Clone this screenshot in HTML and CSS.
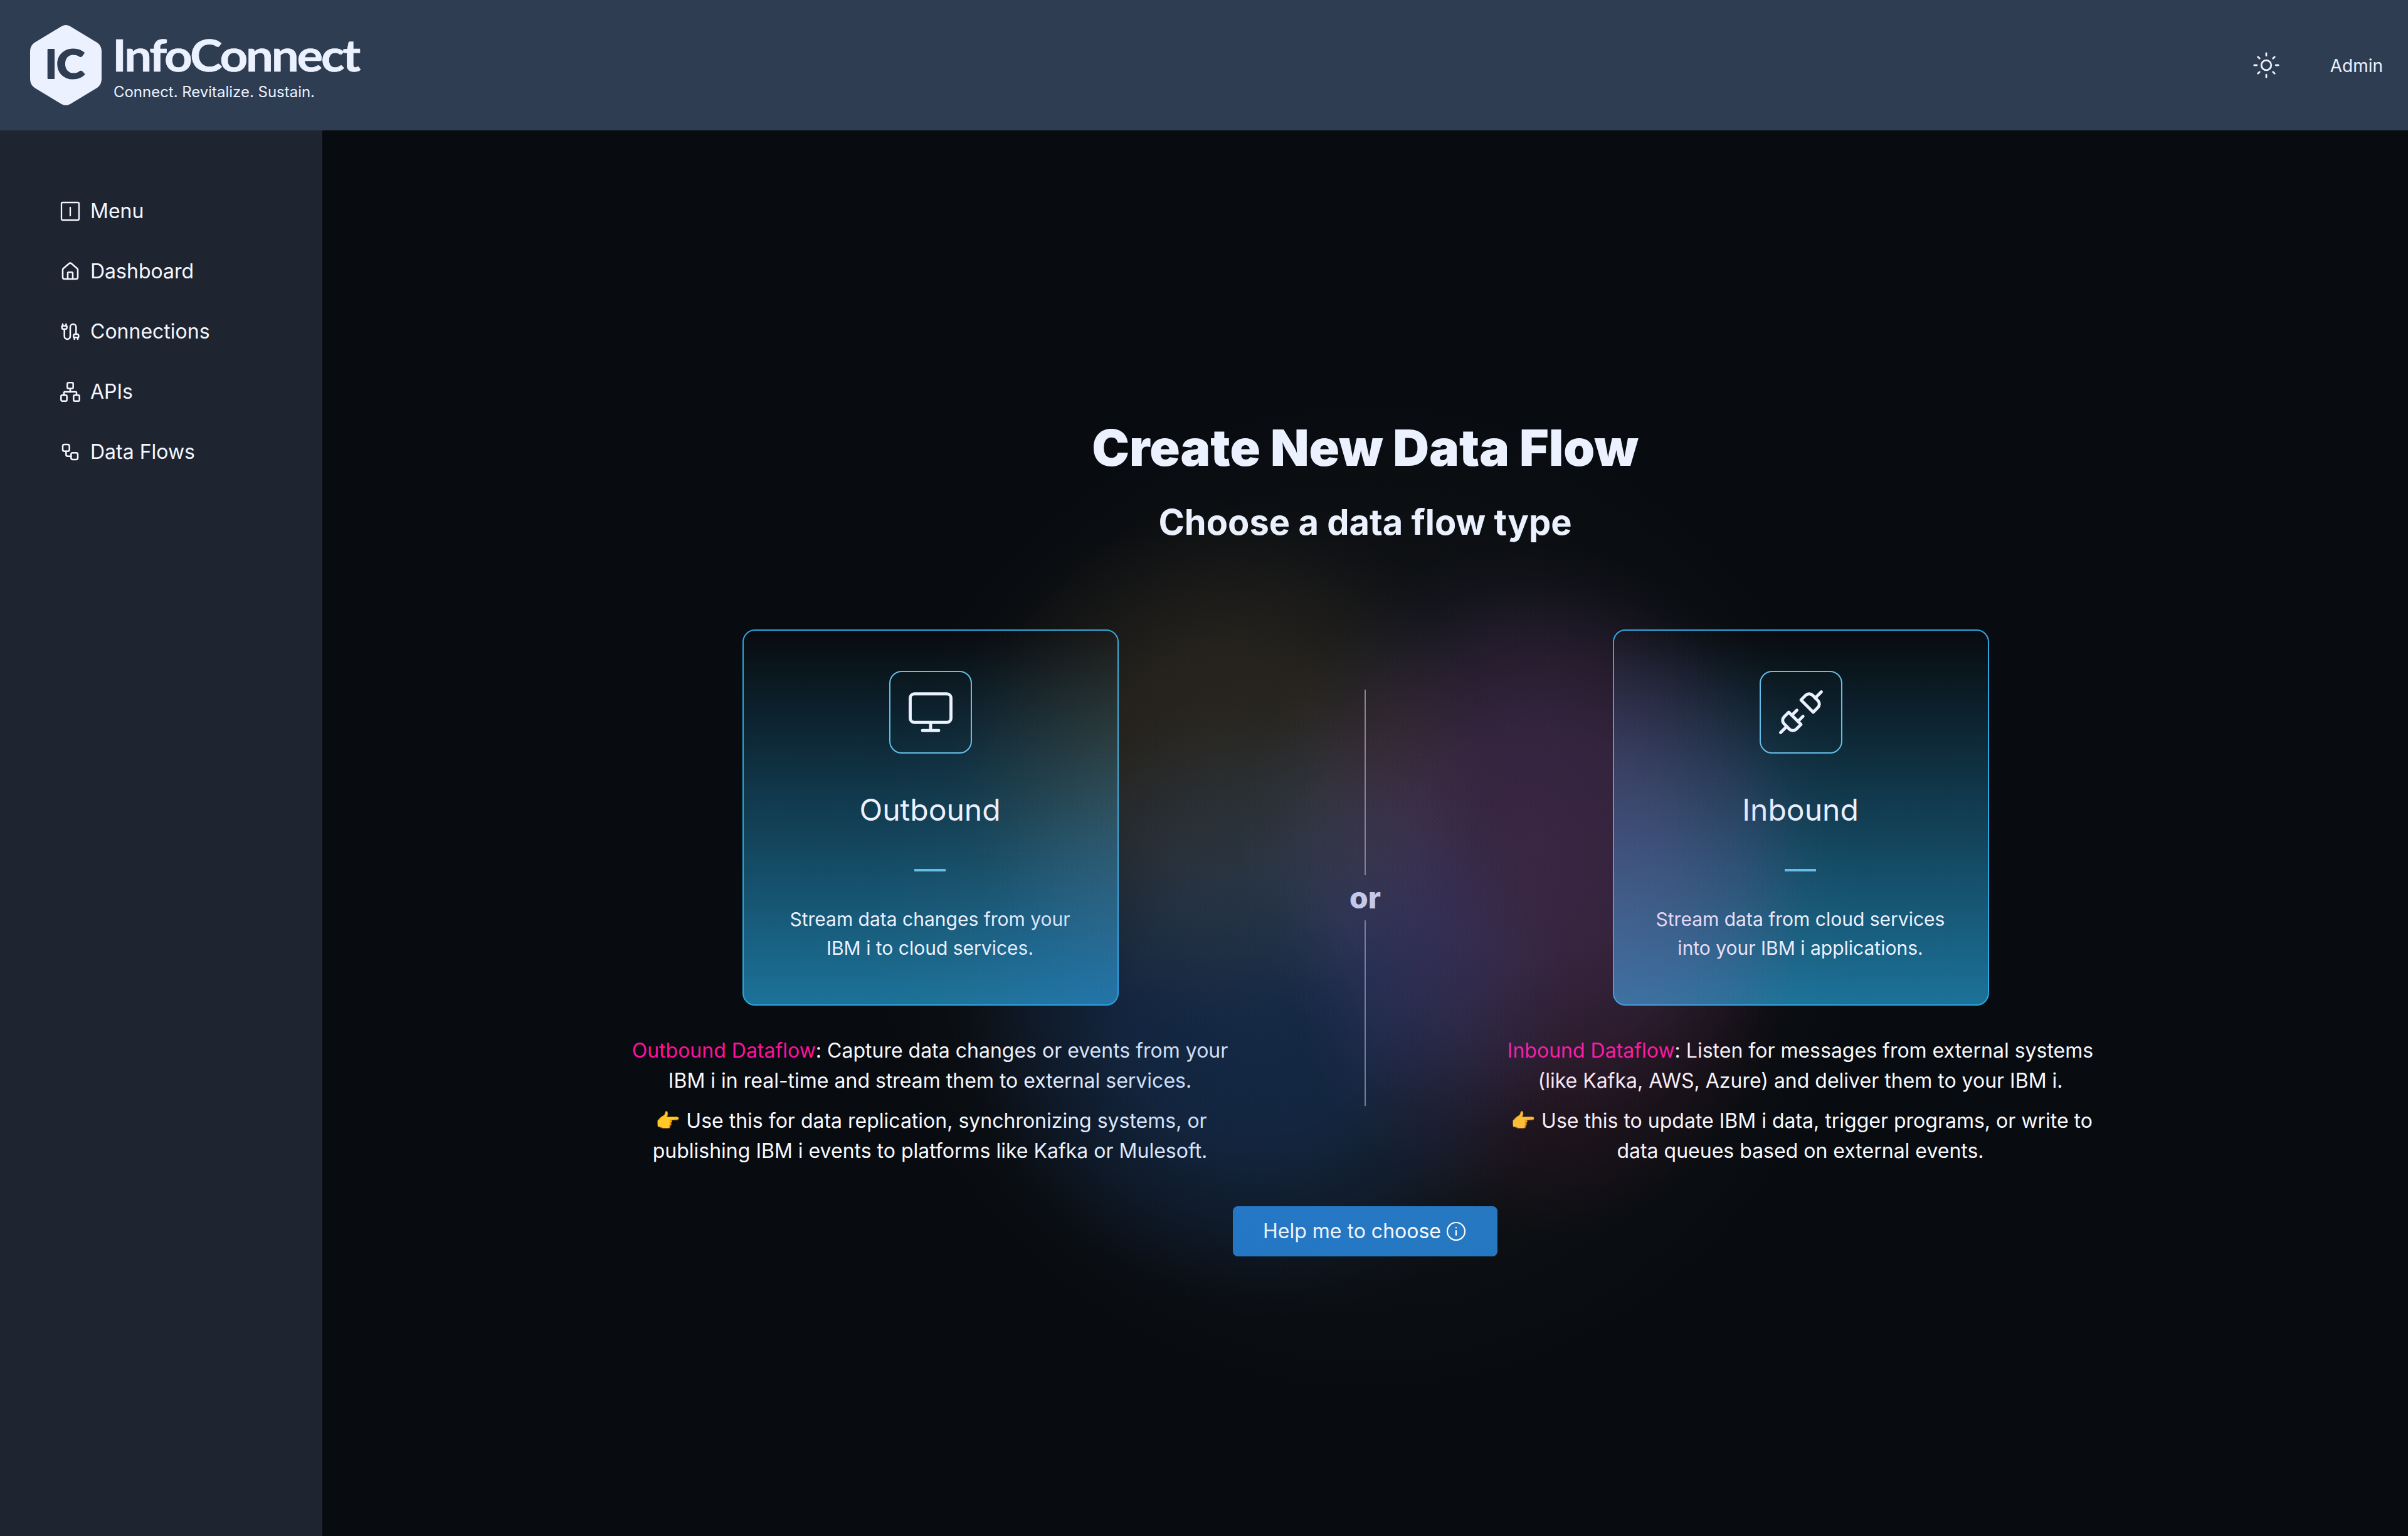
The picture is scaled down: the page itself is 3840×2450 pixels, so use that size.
FILE: index.html
```html
<!DOCTYPE html>
<html lang="en">
<head>
  <meta charset="UTF-8" />
  <meta name="viewport" content="width=device-width, initial-scale=1.0" />
  <title>InfoConnect - Create New Data Flow</title>
  <link rel="stylesheet" href="styles.css">
</head>
<body>
  <!-- Top bar -->
  <header class="topbar">
    <svg class="logo" width="560" height="144" viewBox="0 0 560 144">
      <path class="logo-fill" d="M50 10q7-4 14 0l43 26q7 5 7 14v44q0 9-7 14l-43 26q-7 4-14 0l-43-26q-7-5-7-14v-44q0-9 7-14z" />
      <text class="logo-mark" x="24" y="93">I</text>
      <text class="logo-mark" x="42" y="93" textLength="45" lengthAdjust="spacingAndGlyphs">C</text>
      <text class="logo-name" x="131" y="82" textLength="393" lengthAdjust="spacingAndGlyphs">InfoConnect</text>
      <text class="logo-tag" x="133" y="123" textLength="321" lengthAdjust="spacing">Connect. Revitalize. Sustain.</text>
    </svg>
    <div class="topbar-right">
      <svg class="sun" viewBox="0 0 48 48">
        <circle cx="24" cy="24" r="7.8" />
        <path d="M24 4.800v4M24 39.200v4M4.800 24h4M39.200 24h4M10.700 10.700l2.600 2.600M34.700 34.700l2.600 2.600M10.700 37.300l2.600-2.600M34.700 13.300l2.600-2.600" />
      </svg>
      <span class="user">Admin</span>
    </div>
  </header>

  <div class="layout">
    <!-- Side menu -->
    <nav class="sidebar">
      <a class="nav-item">
        <svg class="nav-icon menu-icon" viewBox="0 0 32 32"><rect x="2" y="2" width="28" height="28" rx="2" /><path d="M16 10v13" /></svg>
        Menu
      </a>
      <a class="nav-item">
        <svg class="nav-icon" viewBox="0 0 24 24"><path d="M15 21v-7a1 1 0 0 0-1-1h-4a1 1 0 0 0-1 1v7" /><path d="M3 10a2 2 0 0 1 .709-1.528l7-5.999a2 2 0 0 1 2.582 0l7 5.999A2 2 0 0 1 21 10v9a2 2 0 0 1-2 2H5a2 2 0 0 1-2-2z" /></svg>
        Dashboard
      </a>
      <a class="nav-item">
        <svg class="nav-icon" viewBox="0 0 24 24"><path d="M17 21v-2a1 1 0 0 1-1-1v-1a2 2 0 0 1 2-2h2a2 2 0 0 1 2 2v1a1 1 0 0 1-1 1v2" /><path d="M19 15V6.500a3.500 3.500 0 0 0-7 0v11a3.500 3.500 0 0 1-7 0V9" /><path d="M21 19h-4" /><path d="M3 5h4V3" /><path d="M7 5a1 1 0 0 1 1 1v1a2 2 0 0 1-2 2H4a2 2 0 0 1-2-2V6a1 1 0 0 1 1-1V3" /></svg>
        Connections
      </a>
      <a class="nav-item">
        <svg class="nav-icon" viewBox="0 0 24 24"><rect x="16" y="16" width="7" height="7" rx="1.500" /><rect x="1" y="16" width="7" height="7" rx="1.500" /><rect x="8.500" y="1" width="7" height="7" rx="1.500" /><path d="M4.500 16v-3a1 1 0 0 1 1-1h13a1 1 0 0 1 1 1v3" /><path d="M12 12V8" /></svg>
        APIs
      </a>
      <a class="nav-item">
        <svg class="nav-icon" viewBox="0 0 24 24"><rect x="3" y="3" width="8" height="8" rx="2" /><path d="M7 11v4a2 2 0 0 0 2 2h4" /><rect x="13" y="13" width="8" height="8" rx="2" /></svg>
        Data Flows
      </a>
    </nav>

    <main class="content">
      <h1 class="title">Create New Data Flow</h1>
      <h2 class="subtitle">Choose a data flow type</h2>

      <div class="choices">
        <section class="choice">
          <div class="card">
            <div class="card-icon">
              <svg viewBox="0 0 24 24"><rect x="2" y="3" width="20" height="14" rx="2" /><path d="M8 21h8M12 17v4" /></svg>
            </div>
            <h3>Outbound</h3>
            <div class="dash"></div>
            <p>Stream data changes from your<br>IBM i to cloud services.</p>
          </div>
          <p class="note"><span class="pink">Outbound Dataflow</span>: Capture data changes or events from your<br>IBM i in real-time and stream them to external services.</p>
          <p class="note hint">👉 Use this for data replication, synchronizing systems, or<br>publishing IBM i events to platforms like Kafka or Mulesoft.</p>
        </section>

        <div class="divider">
          <div class="line"></div>
          <span>or</span>
          <div class="line"></div>
        </div>

        <section class="choice">
          <div class="card">
            <div class="card-icon">
              <svg viewBox="0 0 24 24"><path d="m19 5 3-3M2 22l3-3" /><path d="M6.300 20.300a2.400 2.400 0 0 0 3.400 0L12 18l-6-6-2.300 2.300a2.400 2.400 0 0 0 0 3.400Z" /><path d="M7.500 13.500 10 11M10.500 16.500 13 14" /><path d="m12 6 6 6 2.300-2.300a2.400 2.400 0 0 0 0-3.400l-2.600-2.600a2.400 2.400 0 0 0-3.400 0Z" /></svg>
            </div>
            <h3>Inbound</h3>
            <div class="dash"></div>
            <p>Stream data from cloud services<br>into your IBM i applications.</p>
          </div>
          <p class="note"><span class="pink">Inbound Dataflow</span>: Listen for messages from external systems<br>(like Kafka, AWS, Azure) and deliver them to your IBM i.</p>
          <p class="note hint">👉 Use this to update IBM i data, trigger programs, or write to<br>data queues based on external events.</p>
        </section>
      </div>

      <button class="help">
        Help me to choose
        <svg viewBox="0 0 32 32"><circle cx="16" cy="16" r="14" /><path d="M16 15v7M16 10v.500" /></svg>
      </button>

      <!-- Coloured light over the content -->
      <div class="glow"></div>
    </main>
  </div>
</body>
</html>
```
FILE: styles.css
```css
* {
  box-sizing: border-box;
}
body {
  margin: 0;
  height: 2450px;
  background: #080b0f;
  color: #ebf1ff;
  font-family: Inter, "Liberation Sans", sans-serif;
  font-size: 32px;
  line-height: 48px;
  overflow: hidden;
}
h1, h2, h3, p {
  margin: 0;
}
svg {
  fill: none;
  stroke: currentColor;
  stroke-linecap: round;
  stroke-linejoin: round;
}
/* Top bar */
.topbar {
  display: flex;
  align-items: center;
  justify-content: space-between;
  height: 208px;
  padding: 0 40px 0 48px;
  background: #2f3d53;
}
.logo {
  stroke: none;
}
.logo text,
.logo-fill {
  fill: #ebf1ff;
}
.logo .logo-mark {
  font: 900 62px Lato, sans-serif;
  fill: #2f3d53;
  stroke: #2f3d53;
  stroke-width: 2;
}
.logo-name {
  font: 700 71px Lato, sans-serif;
  letter-spacing: -3px;
  stroke: #ebf1ff;
  stroke-width: 0.6;
}
.logo-tag {
  font-size: 24px;
}
.topbar-right {
  display: flex;
  align-items: center;
  gap: 78px;
  font-size: 28px;
}
.user {
  padding-top: 2px;
}
.sun {
  width: 48px;
  height: 48px;
  stroke-width: 2.8;
}
.layout {
  display: flex;
  height: 2242px;
}
/* Side menu */
.sidebar {
  display: flex;
  flex-direction: column;
  gap: 48px;
  width: 514px;
  padding: 105px 96px;
  background: #1e2531;
}
.nav-item {
  display: flex;
  align-items: center;
  gap: 16px;
  color: #f4f7ff;
}
.nav-icon {
  width: 32px;
  height: 32px;
  stroke-width: 1.9;
}
.menu-icon {
  stroke-width: 2.3;
}
/* Main content */
.content {
  position: relative;
  display: flex;
  flex: 1;
  flex-direction: column;
  align-items: center;
  padding-top: 446px;
}
.title {
  font-size: 80px;
  font-weight: 900;
  line-height: 120px;
}
.subtitle {
  margin-top: 17px;
  font-size: 56px;
  font-weight: 700;
  line-height: 84px;
}
.choices {
  display: flex;
  margin-top: 129px;
}
.choice {
  display: flex;
  flex-direction: column;
  align-items: center;
  width: 1000px;
}
.card {
  display: flex;
  flex-direction: column;
  align-items: center;
  width: 600px;
  height: 600px;
  padding-top: 64px;
  margin: 0 0 48px 2px;
  border: 2px solid #29a8e2;
  border-radius: 20px;
  background: linear-gradient(#080b0f, #1c7299);
  text-align: center;
}
.card-icon {
  display: flex;
  align-items: center;
  justify-content: center;
  width: 132px;
  height: 132px;
  border: 2px solid #63bfe9;
  border-radius: 20px;
}
.card-icon svg {
  width: 78px;
  height: 78px;
  stroke-width: 1.5;
}
.card h3 {
  margin: 54px 2px 0 0;
  font-size: 48px;
  font-weight: 400;
  line-height: 72px;
}
.dash {
  width: 50px;
  height: 4px;
  margin: 58px 2px 54px 0;
  background: #63bfe9;
}
.card p {
  margin-right: 2px;
  font-size: 30px;
  line-height: 45.6px;
}
.note {
  margin-bottom: 16px;
  color: #f8faff;
  text-align: center;
  white-space: nowrap;
}
.hint {
  text-indent: 4px;
}
.pink {
  color: #ff0f9f;
}
.divider {
  display: flex;
  flex-direction: column;
  align-items: center;
  width: 388px;
  padding-top: 96px;
  font-size: 48px;
  font-weight: 800;
  line-height: 72px;
}
.line {
  width: 2px;
  height: 296px;
  background: #7f8089;
}
.help {
  display: flex;
  align-items: center;
  justify-content: center;
  gap: 8px;
  width: 422px;
  height: 80px;
  margin-top: 48px;
  padding: 0 2px 0 0;
  border: 0;
  border-radius: 8px;
  background: #2075c0;
  color: #fff;
  font: inherit;
}
.help svg {
  width: 32px;
  height: 32px;
  stroke-width: 2.2;
}
.glow {
  position: absolute;
  inset: 0;
  pointer-events: none;
  background:
    radial-gradient(circle 430px at 1430px 1010px, rgba(205, 165, 90, 0.13) 0%, rgba(205, 165, 90, 0.115) 40%, rgba(205, 165, 90, 0.055) 70%, rgba(205, 165, 90, 0.012) 90%, rgba(205, 165, 90, 0) 100%),
    radial-gradient(circle 500px at 1490px 1400px, rgba(30, 115, 230, 0.22) 0%, rgba(30, 115, 230, 0.2) 40%, rgba(30, 115, 230, 0.1) 70%, rgba(30, 115, 230, 0.02) 91%, rgba(30, 115, 230, 0) 100%),
    radial-gradient(circle 470px at 1930px 1130px, rgba(160, 130, 255, 0.15) 0%, rgba(160, 130, 255, 0.135) 40%, rgba(160, 130, 255, 0.07) 70%, rgba(160, 130, 255, 0.015) 91%, rgba(160, 130, 255, 0) 100%),
    radial-gradient(ellipse 420px 520px at 1950px 1240px, rgba(235, 50, 130, 0.1) 0%, rgba(235, 50, 130, 0.09) 50%, rgba(235, 50, 130, 0.055) 75%, rgba(235, 50, 130, 0.01) 94%, rgba(235, 50, 130, 0) 100%),
    radial-gradient(circle 800px at 1663px 1222px, rgba(255, 225, 215, 0.05) 0%, rgba(255, 225, 215, 0.03) 60%, rgba(255, 225, 215, 0) 100%);
}
```
